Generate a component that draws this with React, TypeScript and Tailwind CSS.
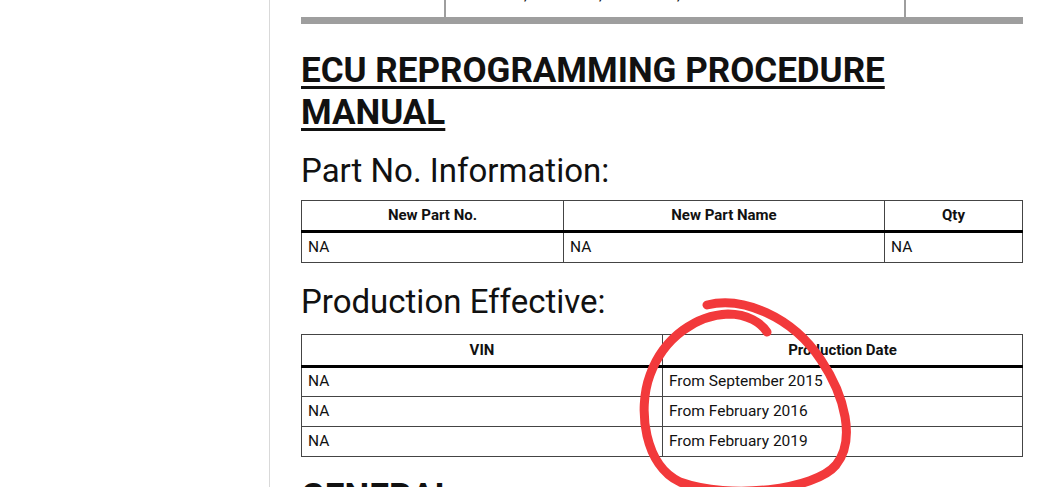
import React from 'react';

const partRows = [{ no: 'NA', name: 'NA', qty: 'NA' }];

const productionRows = [
  { vin: 'NA', date: 'From September 2015' },
  { vin: 'NA', date: 'From February 2016' },
  { vin: 'NA', date: 'From February 2019' },
];

function Annotation() {
  // hand-drawn red circle around the production dates
  return (
    <svg className="pointer-events-none absolute left-0 top-0" width="1058" height="487" viewBox="0 0 1058 487">
      <path
        d="M 707 305 C 742 296, 792 316, 821 360 C 845 396, 856 440, 836 465 C 815 490, 730 500, 680 482 C 645 466, 637 410, 650 375 C 664 336, 698 315, 728 314 C 748 314, 761 323, 767 332"
        fill="none"
        stroke="#f2393b"
        strokeWidth="9"
        strokeLinecap="round"
        strokeLinejoin="round"
      />
    </svg>
  );
}

export default function App() {
  return (
    <div className="relative flex h-[487px] w-[1058px] overflow-hidden bg-white font-['Roboto',sans-serif] text-[#111]">
      {/* Left pane */}
      <div className="w-[270px] shrink-0 border-r border-[#d9d9d9]" />

      {/* Document */}
      <div className="w-[753px] shrink-0 pl-[31px]">
        {/* tail of the previous table */}
        <div className="flex h-[17px] overflow-hidden">
          <div className="w-[145px] border-r-2 border-[#9e9e9e]" />
          <div className="w-[460px] border-r-2 border-[#9e9e9e]">
            <div className="-mt-[12px] text-[15px] leading-[15px]">
              <span className="pl-[78px]">,</span>
              <span className="pl-[72px]">,</span>
              <span className="pl-[75px]">,</span>
            </div>
          </div>
        </div>
        <div className="h-[7px] w-[722px] bg-[#9e9e9e]" />

        <h1 className="mt-[26px] text-[35px] font-bold leading-[42px] underline decoration-[3px] underline-offset-[4px]">
          ECU REPROGRAMMING PROCEDURE
          <br />
          MANUAL
        </h1>

        <h2 className="mt-[16px] text-[33px] leading-[42px]">Part No. Information:</h2>

        <table className="mt-[8px] w-[722px] border-collapse text-[15.5px]">
          <thead>
            <tr className="h-[31px] text-[15px]">
              <th className="w-[262px] border border-b-[3px] border-[#444] border-b-black font-bold">New Part No.</th>
              <th className="w-[321px] border border-b-[3px] border-[#444] border-b-black font-bold">New Part Name</th>
              <th className="border border-b-[3px] border-[#444] border-b-black font-bold">Qty</th>
            </tr>
          </thead>
          <tbody>
            {partRows.map((r, i) => (
              <tr key={i} className="h-[31px]">
                <td className="border border-[#444] px-[6px]">{r.no}</td>
                <td className="border border-[#444] px-[6px]">{r.name}</td>
                <td className="border border-[#444] px-[6px]">{r.qty}</td>
              </tr>
            ))}
          </tbody>
        </table>

        <h2 className="mt-[18px] text-[33px] leading-[42px]">Production Effective:</h2>

        <table className="mt-[11px] w-[722px] border-collapse text-[15.5px]">
          <thead>
            <tr className="h-[32px] text-[15px]">
              <th className="w-[361px] border border-b-[3px] border-[#444] border-b-black font-bold">VIN</th>
              <th className="border border-b-[3px] border-[#444] border-b-black font-bold">Production Date</th>
            </tr>
          </thead>
          <tbody>
            {productionRows.map((r, i) => (
              <tr key={i} className="h-[30px]">
                <td className="border border-[#444] px-[6px]">{r.vin}</td>
                <td className="border border-[#444] px-[6px]">{r.date}</td>
              </tr>
            ))}
          </tbody>
        </table>

        <h1 className="mt-[19px] text-[35px] font-bold leading-[42px] underline decoration-[3px] underline-offset-[4px]">
          GENERAL
        </h1>
      </div>

      <Annotation />
    </div>
  );
}
